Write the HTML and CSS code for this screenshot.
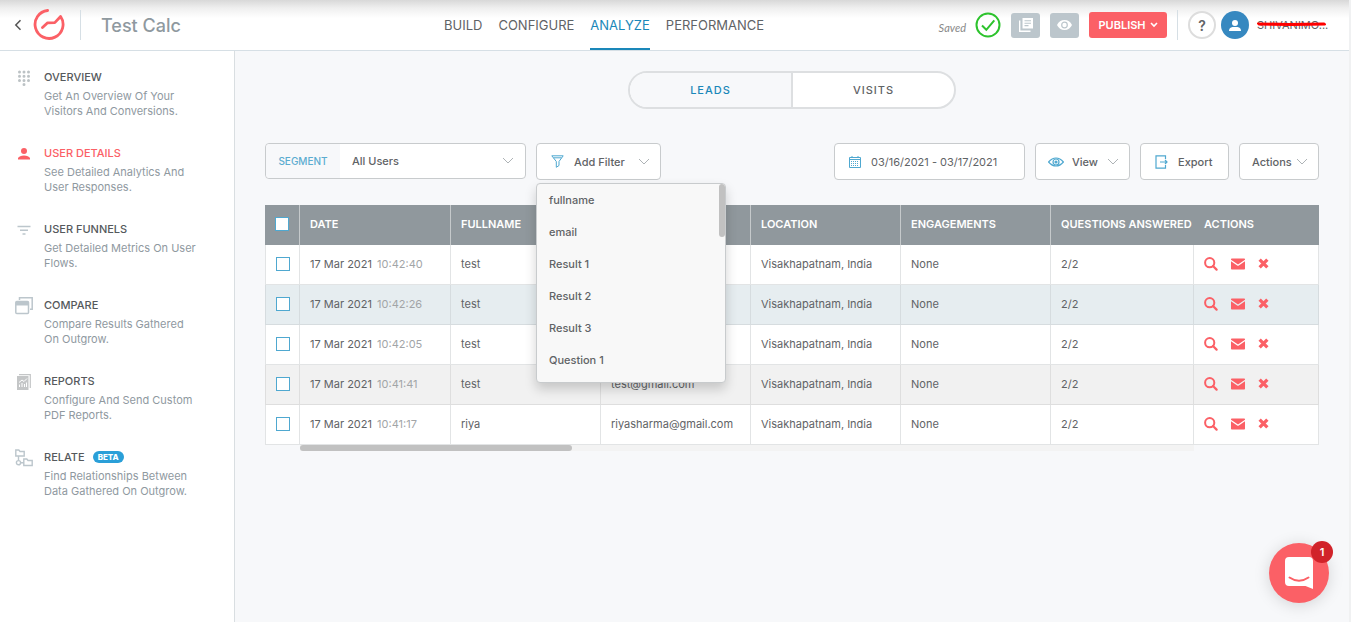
FILE: index.html
```html
<!DOCTYPE html>
<html lang="en">
<head>
    <meta charset="UTF-8">
    <meta name="viewport" content="width=device-width, initial-scale=1.0">
    <title>Test Calc - User Details</title>
    <link rel="stylesheet" href="styles.css">
</head>
<body>
    <!-- Shared icons -->
    <svg class="sprite" aria-hidden="true">
        <symbol id="chevron" viewBox="0 0 12 8"><path d="M1 1l5 5 5-5" fill="none" stroke="currentColor"/></symbol>
        <symbol id="search" viewBox="0 0 14 14"><circle cx="5.7" cy="5.7" r="4.6" fill="none" stroke="currentColor" stroke-width="2"/><path d="M9 9l3.6 3.6" stroke="currentColor" stroke-width="2.2" stroke-linecap="round"/></symbol>
        <symbol id="mail" viewBox="0 0 14 12"><path d="M0 1.2Q0 .5.8.5h12.4q.8 0 .8.7v.6L7 6.600 0 1.800zM0 3.200l6.200 4.300q.8.5 1.600 0L14 3.200v7.500q0 .8-.8.800H.8q-.8 0-.8-.8z" fill="currentColor"/></symbol>
        <symbol id="cross" viewBox="0 0 10 10"><path d="M1.500 1.500l7 7M8.500 1.500l-7 7" stroke="currentColor" stroke-width="3"/></symbol>
    </svg>

    <div class="app">
        <header class="header">
            <div class="brand">
                <a href="#" class="back" aria-label="Back">
                    <svg width="8" height="12" viewBox="0 0 8 12"><path d="M6.500 1.200L1.800 6l4.700 4.800" fill="none" stroke="#555" stroke-width="1.500"/></svg>
                </a>
                <a href="#" class="logo" aria-label="Home">
                    <svg width="32" height="32" viewBox="0 0 32 32" fill="none" stroke="#fb6066" stroke-width="2.800" stroke-linecap="round" stroke-linejoin="round">
                        <path d="M14.600 2.500A14 14 0 1 0 27.600 8.500L21.800 14.600L14.600 14.800L9.500 19.500"/>
                    </svg>
                </a>
                <h1 class="title">Test Calc</h1>
            </div>
            <nav class="nav">
                <a href="#">BUILD</a>
                <a href="#">CONFIGURE</a>
                <a href="#" class="active">ANALYZE</a>
                <a href="#">PERFORMANCE</a>
            </nav>
            <div class="tools">
                <span class="saved">Saved</span>
                <svg class="check" width="26" height="26" viewBox="0 0 26 26" fill="none" stroke="#2dc32d" stroke-width="2"><circle cx="13" cy="13" r="11.500"/><path d="M7 13.500l4.300 4.300 8-9.500"/></svg>
                <button class="square" aria-label="Copy">
                    <svg width="14" height="14" viewBox="0 0 14 14"><path d="M3.500 0H14v10.500H3.500z" fill="#fff"/><path d="M.7 2.500v10.800h10.800" fill="none" stroke="#fff" stroke-width="1.400"/><path d="M5.500 2.800h6.500M5.500 5.200h6.500M5.500 7.600h4" stroke="#bcc6cc" stroke-width="1.100"/></svg>
                </button>
                <button class="square" aria-label="Preview">
                    <svg width="15" height="10" viewBox="0 0 15 10"><path d="M0 5Q2.500 0 7.500 0T15 5q-2.500 5-7.500 5T0 5z" fill="#fff"/><circle cx="7.500" cy="5" r="2.800" fill="none" stroke="#bcc6cc" stroke-width="1.200"/></svg>
                </button>
                <button class="publish">PUBLISH
                    <svg width="8" height="6" viewBox="0 0 8 6"><path d="M1 1l3 3 3-3" fill="none" stroke="#fff" stroke-width="1.600"/></svg>
                </button>
                <div class="account">
                    <button class="help">?</button>
                    <span class="avatar">
                        <svg width="12" height="11" viewBox="0 0 12 11" fill="#fff"><circle cx="6" cy="3" r="3"/><path d="M0 11q0-3.500 3.500-4h5q3.500.5 3.500 4z"/></svg>
                    </span>
                    <span class="user">SHIVANIMO...
                        <svg class="strike" viewBox="0 0 70 6" fill="none" stroke="#f00" stroke-width="2.200" stroke-linecap="round"><path d="M1 2.500l30 .5 36-.5M2 3.500l34 .3 32-.5"/></svg>
                    </span>
                </div>
            </div>
        </header>

        <div class="body">
            <aside class="sidebar">
                <a href="#" class="item">
                    <span class="icon"><svg width="14" height="16" viewBox="0 0 14 16" fill="none" stroke="#bcc2c5" stroke-width="3" stroke-linecap="round" stroke-dasharray="0 4.500"><path d="M2.500 2h9.100M2.500 6.200h9.100M2.500 10.400h9.100M7 14.500h.1"/></svg></span>
                    <span class="text"><strong>OVERVIEW</strong>Get An Overview Of Your Visitors And Conversions.</span>
                </a>
                <a href="#" class="item current">
                    <span class="icon"><svg width="12" height="12" viewBox="0 0 12 12" fill="#fb6066"><circle cx="6" cy="3" r="3"/><path d="M0 11.500v-1.500Q1.500 7.500 6 7.500T12 10v1.500z"/></svg></span>
                    <span class="text"><strong>USER DETAILS</strong>See Detailed Analytics And User Responses.</span>
                </a>
                <a href="#" class="item">
                    <span class="icon"><svg width="14" height="10" viewBox="0 0 14 10" stroke="#bcc6cc" stroke-width="1.600"><path d="M.5 1.500h13M3 5.200h8M5.500 9h3"/></svg></span>
                    <span class="text"><strong>USER FUNNELS</strong>Get Detailed Metrics On User Flows.</span>
                </a>
                <a href="#" class="item">
                    <span class="icon"><svg width="18" height="18" viewBox="0 0 18 18" fill="none" stroke="#bcc6cc" stroke-width="1.500"><path d="M4.500 3V.8h12.700v11.500H15"/><rect x=".8" y="4.500" width="12.700" height="12" rx="1"/><path d="M1 6.500h12.500" stroke-width="4"/></svg></span>
                    <span class="text"><strong>COMPARE</strong>Compare Results Gathered On Outgrow.</span>
                </a>
                <a href="#" class="item">
                    <span class="icon"><svg width="14" height="16" viewBox="0 0 14 16"><path d="M0 2h11.500v14H0z" fill="#c4c6c7"/><path d="M2 .6h11.300V14" fill="none" stroke="#c4c6c7" stroke-width="1.200"/><path d="M2.500 13v-2.500M5 13v-4M7.500 13v-3M9.500 13V8.500M2 8.500l3-2.500 2 1.500L10 4.500" fill="none" stroke="#fff" stroke-width="1"/></svg></span>
                    <span class="text"><strong>REPORTS</strong>Configure And Send Custom PDF Reports.</span>
                </a>
                <a href="#" class="item">
                    <span class="icon"><svg width="18" height="18" viewBox="0 0 18 18" fill="none" stroke="#bcc6cc" stroke-width="1.400"><path d="M.8 1h3l1.200 1.500h4.200V7H.8zM8.800 10h3l1.200 1.500h4.200V16.500H8.800zM3.500 7v4.500M5.500 13.800h3.300"/><circle cx="3.500" cy="13.700" r="2.100"/></svg></span>
                    <span class="text"><strong>RELATE <em class="beta">BETA</em></strong>Find Relationships Between Data Gathered On Outgrow.</span>
                </a>
            </aside>

            <main class="main">
                <div class="tabs">
                    <button class="on">LEADS</button>
                    <button>VISITS</button>
                </div>

                <div class="filters">
                    <div class="segment">
                        <label for="segment">SEGMENT</label>
                        <select id="segment"><option>All Users</option></select>
                        <svg class="chevron" width="12" height="8"><use href="#chevron"/></svg>
                    </div>
                    <div class="filter">
                        <button class="btn">
                            <svg class="blue" width="13" height="13" viewBox="0 0 13 13" fill="none" stroke="currentColor"><path d="M.8.8h11.400L8 6.500v4L5.300 12.300V6.500zM2.500 2.800h8"/></svg>
                            Add Filter
                            <svg class="chevron" width="12" height="8"><use href="#chevron"/></svg>
                        </button>
                        <div class="dropdown">
                            <ul>
                                <li>fullname</li>
                                <li>email</li>
                                <li>Result 1</li>
                                <li>Result 2</li>
                                <li>Result 3</li>
                                <li>Question 1</li>
                            </ul>
                            <div class="vbar"></div>
                        </div>
                    </div>
                    <label class="date">
                        <svg class="blue" width="12" height="12" viewBox="0 0 12 12" fill="none" stroke="currentColor"><path d="M.5 1.500h11v10H.5zM.5 3.500h11M3 0v2M9 0v2"/><path d="M2 5.500h8M2 7.500h8M2 9.500h8" stroke-dasharray="1 1"/></svg>
                        <input type="text" value="03/16/2021 - 03/17/2021" aria-label="Date range">
                    </label>
                    <button class="btn view">
                        <svg class="blue" width="16" height="10" viewBox="0 0 16 10" fill="none" stroke="currentColor" stroke-width="1.200"><path d="M.6 5Q4 1 8 1t7.400 4Q12 9 8 9T.6 5z"/><circle cx="8" cy="5" r="3"/><circle cx="8" cy="5" r="1" fill="currentColor"/></svg>
                        View
                        <svg class="chevron" width="12" height="8"><use href="#chevron"/></svg>
                    </button>
                    <button class="btn export">
                        <svg class="blue" width="13" height="14" viewBox="0 0 13 14" fill="none" stroke="currentColor" stroke-width="1.200"><path d="M10.500 4V.8H1v12.400h9.500V10M5 7h7M10 5l2 2-2 2"/></svg>
                        Export
                    </button>
                    <button class="btn actions">
                        Actions
                        <svg class="chevron" width="12" height="8"><use href="#chevron"/></svg>
                    </button>
                </div>

                <table>
                    <colgroup>
                        <col class="c-check"><col class="c-date"><col class="c-data"><col class="c-data"><col class="c-data"><col class="c-data"><col class="c-questions"><col>
                    </colgroup>
                    <thead>
                        <tr>
                            <th><input type="checkbox" aria-label="Select all"></th>
                            <th>DATE</th>
                            <th>FULLNAME</th>
                            <th>EMAIL</th>
                            <th>LOCATION</th>
                            <th>ENGAGEMENTS</th>
                            <th>QUESTIONS ANSWERED</th>
                            <th>ACTIONS</th>
                        </tr>
                    </thead>
                    <tbody id="leads"></tbody>
                </table>
                <div class="hbar"><div class="thumb"></div></div>
            </main>
        </div>
    </div>

    <button class="chat" aria-label="Open chat">
        <svg width="28" height="32" viewBox="0 0 28 32"><path d="M4 0h20q4 0 4 4v28l-7.500-3H4q-4 0-4-4V4q0-4 4-4z" fill="#fff"/><path d="M4.500 20.500q9.500 6.500 19 0" fill="none" stroke="#fb6066" stroke-width="2" stroke-linecap="round"/></svg>
        <span class="count">1</span>
    </button>

    <script>
        const leads = [
            ["10:42:40", "test", "test@gmail.com"],
            ["10:42:26", "test", "test@gmail.com"],
            ["10:42:05", "test", "test@gmail.com"],
            ["10:41:41", "test", "test@gmail.com"],
            ["10:41:17", "riya", "riyasharma@gmail.com"]
        ];

        const icon = (name, w, h) => `<button class="act" aria-label="${name}"><svg width="${w}" height="${h}"><use href="#${name}"/></svg></button>`;

        document.getElementById("leads").innerHTML = leads.map(([time, name, email]) => `
            <tr>
                <td><input type="checkbox" aria-label="Select ${name}"></td>
                <td>17 Mar 2021 <span class="time">${time}</span></td>
                <td>${name}</td>
                <td>${email}</td>
                <td>Visakhapatnam, India</td>
                <td>None</td>
                <td>2/2</td>
                <td><div class="acts">${icon("search", 14, 14)}${icon("mail", 14, 12)}${icon("cross", 11, 11)}</div></td>
            </tr>`).join("");
    </script>
</body>
</html>
```
FILE: styles.css
```css
* {
    box-sizing: border-box;
}
body {
    margin: 0;
    background-color: #f0f1f2;
    font-family: Inter, "Open Sans", sans-serif;
    font-size: 11px;
    color: #5f6366;
}
button, input, select {
    font: inherit;
    color: inherit;
}
button {
    padding: 0;
    border: none;
    background: none;
    cursor: pointer;
}
a {
    color: inherit;
    text-decoration: none;
}
svg {
    display: block;
    flex: none;
}
.sprite {
    position: absolute;
    width: 0;
    height: 0;
}
.app {
    display: flex;
    flex-direction: column;
    min-height: 100vh;
    margin-right: 2px;
    background-color: #f7f8fa;
}

/* Header */
.header {
    display: flex;
    height: 51px;
    border-bottom: 1px solid #d6dfe5;
    background: linear-gradient(#d8d8d8, #efefef 8px, #fff 18px);
}
.brand {
    display: flex;
    align-items: center;
    width: 444px;
    padding-left: 14px;
}
.logo {
    margin-left: 11px;
    padding-right: 15px;
    border-right: 1px solid #d6dfe5;
    height: 30px;
}
.logo svg {
    margin-top: -2px;
}
.title {
    margin: 0 0 0 20px;
    font-size: 18px;
    font-weight: 500;
    color: #8f999f;
}
.nav {
    display: flex;
    gap: 16px;
    font-size: 13px;
}
.nav a {
    line-height: 50px;
    height: 50px;
}
.nav .active {
    color: #1a87b9;
    border-bottom: 2px solid #1a87b9;
}
.tools {
    display: flex;
    align-items: center;
    margin-left: auto;
    padding-right: 20px;
}
.saved {
    margin: 4px 9px 0 0;
    color: #888;
    font-family: Lato, sans-serif;
    font-style: italic;
}
.square {
    display: flex;
    align-items: center;
    justify-content: center;
    width: 29px;
    height: 25px;
    margin-left: 10px;
    border-radius: 3px;
    background-color: #bcc6cc;
}
.publish {
    display: flex;
    align-items: center;
    justify-content: center;
    gap: 4px;
    width: 78px;
    height: 26px;
    margin-left: 10px;
    border-radius: 3px;
    background-color: #fb6066;
    color: #fff;
    font-weight: 600;
}
.account {
    display: flex;
    align-items: center;
    height: 30px;
    margin-left: 10px;
    padding-left: 10px;
    border-left: 1px solid #d6dfe5;
}
.help {
    width: 28px;
    height: 28px;
    border: 2px solid #ddd;
    border-radius: 50%;
    background-color: #fff;
    font-size: 14px;
    font-weight: 600;
}
.avatar {
    display: flex;
    align-items: center;
    justify-content: center;
    width: 28px;
    height: 28px;
    margin: 0 8px 0 5px;
    border-radius: 50%;
    background-color: #3688c0;
}
.user {
    position: relative;
    width: 72px;
    white-space: nowrap;
}
.strike {
    position: absolute;
    left: 0;
    top: 3px;
    width: 70px;
    height: 6px;
}

/* Sidebar */
.body {
    display: flex;
    flex: 1;
}
.sidebar {
    flex: none;
    display: flex;
    flex-direction: column;
    gap: 25px;
    width: 235px;
    padding: 17px 35px 0 14px;
    border-right: 1px solid #d9dee1;
    background-color: #fff;
}
.item {
    display: flex;
    gap: 10px;
    line-height: 15px;
    color: #8f999f;
}
.icon {
    display: flex;
    align-items: center;
    justify-content: center;
    flex: none;
    width: 20px;
    height: 20px;
}
.item strong {
    display: flex;
    align-items: center;
    gap: 8px;
    height: 18px;
    margin-bottom: 3px;
    font-weight: 500;
    color: #55595c;
}
.item.current strong {
    color: #fb6066;
}
.beta {
    padding: 0 5px;
    border-radius: 6px;
    background-color: #2a9fd8;
    color: #fff;
    font-size: 8px;
    font-style: normal;
    font-weight: 800;
    line-height: 12px;
}

/* Content */
.main {
    flex: 1;
    min-width: 0;
    padding: 20px 30px;
}
.tabs {
    display: flex;
    width: 328px;
    height: 38px;
    margin: 0 auto 34px;
    border: 2px solid #dddfe1;
    border-radius: 19px;
    background-color: #fff;
    overflow: hidden;
}
.tabs button {
    flex: 1;
    font-weight: 500;
    letter-spacing: 1px;
}
.tabs .on {
    border-right: 2px solid #dddfe1;
    background-color: #f7f8fa;
    color: #1a87b9;
}
.filters {
    display: flex;
    align-items: flex-start;
    gap: 10px;
    margin-bottom: 25px;
    font-weight: 500;
}
.segment, .btn, .date {
    display: flex;
    align-items: center;
    height: 37px;
    border: 1px solid #c8cbcd;
    border-radius: 4px;
    background-color: #fff;
}
.segment {
    width: 261px;
    height: 36px;
    padding-right: 11px;
}
.segment label {
    width: 74px;
    line-height: 34px;
    border-radius: 4px 0 0 4px;
    background-color: #f7f8fa;
    color: #5bacd0;
    font-size: 10px;
    text-align: center;
}
.segment select {
    flex: 1;
    height: 34px;
    padding: 0 12px;
    border: none;
    background: none;
    appearance: none;
}
.chevron {
    margin-left: auto;
    color: #aeb3b6;
}
.blue {
    color: #4fa8d0;
}
.filter {
    position: relative;
    margin-right: auto;
}
.btn {
    gap: 10px;
    width: 125px;
    padding: 0 10px 0 14px;
    font-weight: 500;
}
.view {
    gap: 8px;
    width: 95px;
    padding-left: 12px;
}
.export {
    width: 89px;
}
.actions {
    gap: 4px;
    width: 80px;
    padding-left: 12px;
}
.date {
    gap: 10px;
    width: 191px;
    padding-left: 14px;
    font-weight: 400;
}
.date input {
    width: 145px;
    padding: 0;
    border: none;
    background: none;
}
.dropdown {
    position: absolute;
    top: 40px;
    left: 0;
    z-index: 2;
    display: flex;
    width: 190px;
    height: 200px;
    border: 1px solid #c8cbcd;
    border-radius: 4px;
    background-color: #f8f8f8;
    box-shadow: 0 6px 12px rgba(0, 0, 0, 0.18);
    overflow: hidden;
}
.dropdown ul {
    flex: 1;
    margin: 0;
    padding: 0;
    list-style: none;
}
.dropdown li {
    padding-left: 12px;
    line-height: 32px;
}
.vbar {
    width: 6px;
    height: 53px;
    border-radius: 3px;
    background-color: #c1c1c1;
}

/* Table */
table {
    width: 100%;
    table-layout: fixed;
    border-collapse: separate;
    border-spacing: 0;
}
.c-check {
    width: 35px;
}
.c-date {
    width: 151px;
}
.c-data {
    width: 150px;
}
.c-questions {
    width: 143px;
}
th, td {
    height: 40px;
    padding: 0 0 2px 10px;
    border-right: 1px solid #e2e4e5;
    text-align: left;
    white-space: nowrap;
    overflow: hidden;
}
th {
    background-color: #90989d;
    border-right-color: #c5c9cb;
    color: #fff;
    font-weight: 600;
}
th:nth-child(n+7) {
    border-right-color: #90989d;
}
td {
    border-bottom: 1px solid #e2e4e5;
    background-color: #fff;
}
td:first-child {
    border-left: 1px solid #e2e4e5;
}
tr:nth-child(2) td {
    background-color: #e6edf0;
    border-color: #d6dcdf;
}
tr:nth-child(4) td {
    background-color: #f1f1f1;
    border-color: #dedede;
}
th:first-child, td:first-child {
    padding-left: 0;
}
table input {
    display: block;
    width: 14px;
    height: 14px;
    margin: 0 auto;
    border: 1px solid #4fa8d0;
    background-color: #fff;
    appearance: none;
}
.time {
    margin-left: 2px;
    color: #a2a5a7;
}
.acts {
    display: flex;
    align-items: center;
    gap: 13px;
}
.act {
    color: #fb6066;
}
.hbar {
    margin: 0 125px 0 35px;
    background-color: #f3f3f3;
}
.thumb {
    width: 272px;
    height: 6px;
    border-radius: 3px;
    background-color: #c1c1c1;
}

/* Chat launcher */
.chat {
    position: fixed;
    right: 22px;
    bottom: 19px;
    display: flex;
    align-items: center;
    justify-content: center;
    width: 60px;
    height: 60px;
    border-radius: 50%;
    background-color: #fb6066;
    box-shadow: 0 2px 16px rgba(0, 0, 0, 0.15);
}
.count {
    position: absolute;
    top: -2px;
    right: -4px;
    width: 22px;
    border-radius: 50%;
    background-color: #d1232a;
    color: #fff;
    font-weight: 600;
    line-height: 22px;
}
```
